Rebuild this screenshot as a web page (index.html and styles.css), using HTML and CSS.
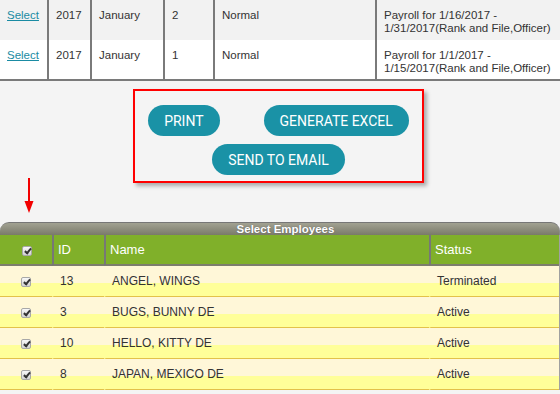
FILE: index.html
```html
<!DOCTYPE html>
<html lang="en">
  <head>
    <meta name="viewport" content="width=device-width" />
    <title>Payroll Report</title>
    <link rel="stylesheet" href="styles.css">
  </head>
  <body>
    <main class="page">
      <table class="runs">
        <colgroup>
          <col class="c-select" />
          <col class="c-year" />
          <col class="c-month" />
          <col class="c-period" />
          <col class="c-type" />
          <col class="c-desc" />
        </colgroup>
        <tr class="alt">
          <td><a href="#">Select</a></td>
          <td>2017</td>
          <td>January</td>
          <td>2</td>
          <td>Normal</td>
          <td>Payroll for 1/16/2017 -<br />1/31/2017(Rank and File,Officer)</td>
        </tr>
        <tr>
          <td><a href="#">Select</a></td>
          <td>2017</td>
          <td>January</td>
          <td>1</td>
          <td>Normal</td>
          <td>Payroll for 1/1/2017 -<br />1/15/2017(Rank and File,Officer)</td>
        </tr>
      </table>

      <div class="actions">
        <div class="action-row">
          <button class="btn">PRINT</button>
          <button class="btn">GENERATE EXCEL</button>
        </div>
        <div class="action-row">
          <button class="btn">SEND TO EMAIL</button>
        </div>
      </div>

      <section class="employees">
        <!-- annotation arrow pointing at the select-all box -->
        <svg class="marker" width="10" height="36" viewBox="0 0 10 36">
          <rect x="4" y="0" width="2" height="26" fill="#f20000" />
          <polygon points="0.5,23 9.5,23 5,35" fill="#f20000" />
        </svg>
        <div class="panel-title">Select Employees</div>
        <table class="emp-table">
          <colgroup>
            <col class="c-chk" />
            <col class="c-id" />
            <col class="c-name" />
            <col />
          </colgroup>
          <thead>
            <tr>
              <th class="chk"><span class="tick"></span></th>
              <th>ID</th>
              <th>Name</th>
              <th>Status</th>
            </tr>
          </thead>
          <tbody>
            <tr>
              <td class="chk"><span class="tick"></span></td>
              <td>13</td>
              <td>ANGEL, WINGS</td>
              <td>Terminated</td>
            </tr>
            <tr>
              <td class="chk"><span class="tick"></span></td>
              <td>3</td>
              <td>BUGS, BUNNY DE</td>
              <td>Active</td>
            </tr>
            <tr>
              <td class="chk"><span class="tick"></span></td>
              <td>10</td>
              <td>HELLO, KITTY DE</td>
              <td>Active</td>
            </tr>
            <tr>
              <td class="chk"><span class="tick"></span></td>
              <td>8</td>
              <td>JAPAN, MEXICO DE</td>
              <td>Active</td>
            </tr>
          </tbody>
        </table>
      </section>
    </main>
  </body>
</html>
```

FILE: styles.css
```css
html, body {
  margin: 0;
  background: #f4f4f4;
  overflow: hidden;
}

.page {
  width: 560px;
  font-family: "Liberation Sans", Arial, sans-serif;
  color: #333;
}

/* payroll runs list */
.runs {
  width: 560px;
  border-collapse: separate;
  border-spacing: 0;
  font-size: 11.5px;
  line-height: 13px;
  table-layout: fixed;
}

.runs .c-select { width: 47px; }
.runs .c-year { width: 43px; }
.runs .c-month { width: 73px; }
.runs .c-period { width: 50px; }
.runs .c-type { width: 162px; }

.runs tr {
  height: 40px;
  background: #fff;
}

.runs tr.alt {
  background: #f2f2f2;
}

.runs td {
  vertical-align: top;
  padding: 9px 7px 4px 7px;
  border-left: 2px solid #7a7a7a;
  white-space: nowrap;
}

.runs td:first-child {
  border-left: 0;
}

.runs tr:last-child td {
  border-bottom: 2px solid #7a7a7a;
}

.runs a {
  color: #1a8ba3;
  text-decoration: underline;
}

/* action buttons */
.actions {
  width: 287px;
  margin: 8px 0 0 133px;
  padding: 14px 0 6px;
  border: 2px solid #ff0000;
  box-shadow: 3px 3px 4px rgba(0, 0, 0, 0.3);
  display: flex;
  flex-direction: column;
  align-items: center;
  gap: 8px;
}

.action-row {
  display: flex;
  gap: 44px;
}

.btn {
  height: 31px;
  padding: 0 16px;
  border: 0;
  border-radius: 16px;
  background: #1a92a6;
  color: #fff;
  font-family: Roboto, "Liberation Sans", sans-serif;
  font-size: 14px;
}

/* employees panel */
.employees {
  position: relative;
  margin-top: 39px;
  width: 560px;
}

.marker {
  position: absolute;
  left: 24px;
  top: -44px;
}

.panel-title {
  height: 12px;
  border-top: 1px solid #777;
  border-right: 1px solid #8a8a8a;
  border-radius: 9px 9px 0 0;
  background: linear-gradient(#a2a292, #7a7a6a);
  color: #fff;
  font-family: "Liberation Sans", Arial, sans-serif;
  font-weight: bold;
  font-size: 11.5px;
  line-height: 13px;
  text-align: center;
  padding-left: 12px;
  text-shadow: 0 0 1px #555;
}

.emp-table {
  width: 560px;
  border-collapse: separate;
  border-spacing: 0;
  table-layout: fixed;
  border-right: 1px solid #a0a0a0;
}

.emp-table .c-chk { width: 52px; }
.emp-table .c-id { width: 52px; }
.emp-table .c-name { width: 325px; }

.emp-table thead tr {
  height: 31px;
  background: #80b02a;
}

.emp-table th {
  color: #fff;
  font-weight: normal;
  font-size: 13px;
  text-align: left;
  padding: 0 4px;
  border-left: 2px solid #777;
  border-bottom: 2px solid #7d7d6d;
}

.emp-table th:first-child {
  border-left: 0;
}

.emp-table tbody tr {
  height: 31px;
  background: linear-gradient(#fff7d8 55%, #ffff99 55%);
}

.emp-table td {
  font-size: 12px;
  padding: 0 0 1px 6px;
  border-bottom: 1px solid #e3c24a;
  border-left: 2px solid transparent;
}

.emp-table td:first-child {
  border-left: 0;
}

.emp-table .chk {
  text-align: center;
  padding: 0;
}

.emp-table thead .chk .tick {
  margin-left: 2px;
}

.tick {
  display: inline-block;
  vertical-align: middle;
  width: 8px;
  height: 8px;
  border: 1px solid #a8a8a8;
  border-radius: 2px;
  background: linear-gradient(#f8f8f8, #d4d4d4);
  position: relative;
}

.tick::after {
  content: "";
  position: absolute;
  left: 3px;
  top: 0px;
  width: 2px;
  height: 5px;
  border: solid #333;
  border-width: 0 2px 2px 0;
  transform: rotate(40deg);
}
```
